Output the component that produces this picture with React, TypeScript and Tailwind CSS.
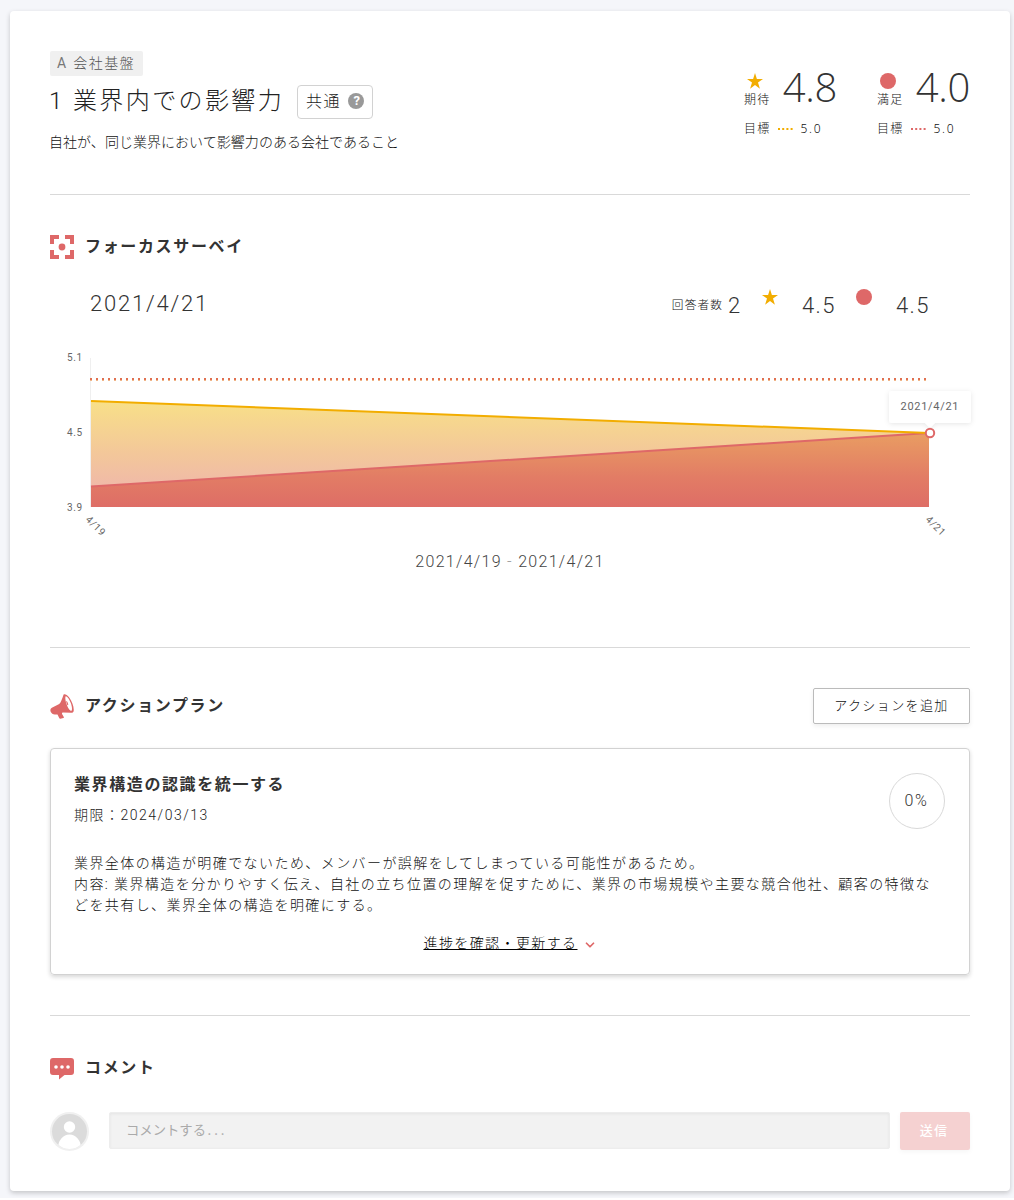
import React, { useState, FormEvent } from 'react';
import { ChevronDown } from 'lucide-react';

const sans = "font-['Roboto','Noto_Sans_CJK_JP',sans-serif]";
const openSans = "font-['Open_Sans','Noto_Sans_CJK_JP',sans-serif]";

const StarIcon: React.FC = () => (
  <svg width="16" height="16" viewBox="0 0 16 16" className="shrink-0">
    <path
      d="M8 0l1.900 5.900H16l-5 3.700 1.900 6.100L8 12l-4.900 3.700L5 9.600 0 5.900h6.100z"
      fill="#f2ad00"
    />
  </svg>
);

const CircleIcon: React.FC = () => (
  <span className="block h-4 w-4 shrink-0 rounded-full bg-[#de6868]" />
);

const FocusIcon: React.FC = () => (
  <svg width="24" height="24" viewBox="0 0 24 24" fill="#de6868">
    <path d="M0 0h9v4H4v5H0zM15 0h9v9h-4V4h-5zM0 15h4v5h5v4H0zM20 15h4v9h-9v-4h5z" />
    <circle cx="12" cy="12" r="3.400" />
  </svg>
);

const MegaphoneIcon: React.FC = () => (
  <svg width="24" height="26" viewBox="0 0 24 26">
    <path
      d="M13.600 1.500C14.600.7 16.800 1.300 19.200 4.400c3 4 4.900 9.600 4.500 13.400-.2 1.700-1.300 2.200-2.600 2l-8.200-.4c-.9.200-1.200.9-.7 1.900l1.600 2.600c.3.600.1.900-.4 1.100l-3 .8c-.6.100-1-.1-1.200-.7l-1.700-3.700-2.200.1c-1.900.3-3.900-.9-4.600-2.700-.7-1.800-.2-3.300 1.200-4l7.300-3.900c1.500-1 2.900-5 4.400-9.400z"
      fill="#de6868"
    />
    <path
      d="M15.800 3.200c1.500 0 3.700 3.200 5 6.700 1.300 3.500 1.600 7.300.7 7.800-1.200.6-3.500-2.500-4.800-6.200-1.300-3.600-1.800-7.800-.9-8.300z"
      fill="#fff"
    />
    <path d="M16.200 8c1.200.3 2.300 2.800 2 4.100-.3.500-.9.100-1.300-1.100-.4-1.100-.8-2.300-.7-3z" fill="#de6868" />
  </svg>
);

const CommentIcon: React.FC = () => (
  <svg width="24" height="22" viewBox="0 0 24 22">
    <path
      d="M3 0h18a3 3 0 0 1 3 3v11a3 3 0 0 1-3 3h-6.500L9 21.500V17H3a3 3 0 0 1-3-3V3a3 3 0 0 1 3-3z"
      fill="#de6868"
    />
    <circle cx="6" cy="9" r="1.800" fill="#fff" />
    <circle cx="12" cy="9" r="1.800" fill="#fff" />
    <circle cx="18" cy="9" r="1.800" fill="#fff" />
  </svg>
);

const Avatar: React.FC = () => (
  <svg width="39" height="39" viewBox="0 0 39 39" className="shrink-0">
    <defs>
      <clipPath id="avatar">
        <circle cx="19.500" cy="19.500" r="17.500" />
      </clipPath>
    </defs>
    <circle cx="19.500" cy="19.500" r="19.500" fill="#f0f0f0" />
    <circle cx="19.500" cy="19.500" r="17.500" fill="#dbdbdb" />
    <g clipPath="url(#avatar)" fill="#fff">
      <circle cx="19.500" cy="15" r="5.700" />
      <ellipse cx="19.500" cy="36" rx="11.500" ry="13.500" />
    </g>
  </svg>
);

type ScoreProps = {
  icon: React.ReactNode;
  label: string;
  value: string;
  target: string;
  color: string;
};

const Score: React.FC<ScoreProps> = ({ icon, label, value, target, color }) => (
  <div className={`w-[93px] ${openSans}`}>
    <div className="flex h-[44px]">
      <div className="flex w-[39px] flex-col pt-[5px]">
        <div className="pl-[3px]">{icon}</div>
        <span className="mt-1 text-[12px] font-light leading-[14px] tracking-[1.2px] text-[#111]">{label}</span>
      </div>
      <span className="whitespace-nowrap text-[40px] font-light leading-[38px] tracking-[-0.3px]">
        {value}
      </span>
    </div>
    <div className="mt-[9px] flex h-[16px] items-center text-[12px] font-light tracking-[1.2px] text-[#111]">
      <span>目標</span>
      <svg width="15" height="2" viewBox="0 0 15 2" className="ml-[8px] mr-[7px]">
        <path d="M0 1h15" stroke={color} strokeWidth="2" strokeDasharray="2 2.200" />
      </svg>
      <span className="font-['Noto_Sans',sans-serif] tracking-[1.8px]">{target}</span>
    </div>
  </div>
);

const SectionTitle: React.FC<{ icon: React.ReactNode; title: string }> = ({ icon, title }) => (
  <div className="flex items-center">
    <div className="mr-[11px] flex w-6 justify-center">{icon}</div>
    <h2 className="text-[16px] font-bold leading-6 tracking-[1.650px]">{title}</h2>
  </div>
);

const SurveyChart: React.FC = () => (
  <svg width="930" height="210" viewBox="50 340 930 210" className="block overflow-visible">
    <defs>
      <linearGradient id="expect" x1="0" y1="0" x2="0" y2="1">
        <stop offset="0" stopColor="#f8e088" />
        <stop offset="0.500" stopColor="#f3c79a" />
        <stop offset="1" stopColor="#eeb1b1" />
      </linearGradient>
      <linearGradient id="satisfy" gradientUnits="userSpaceOnUse" x1="0" y1="433" x2="0" y2="507">
        <stop offset="0" stopColor="#e99d62" />
        <stop offset="0.600" stopColor="#e27c65" />
        <stop offset="1" stopColor="#de6d66" />
      </linearGradient>
      <filter id="tip" x="-20%" y="-40%" width="140%" height="200%">
        <feDropShadow dx="0" dy="1" stdDeviation="2.500" floodOpacity="0.100" />
      </filter>
    </defs>

    <path d="M90.500 358V507" stroke="#efefef" />
    <path d="M91 401L929 433V507H91z" fill="url(#expect)" />
    <path d="M91 486.500L929 433V507H91z" fill="url(#satisfy)" />
    <path d="M91 486.500L929 433" stroke="#de6868" strokeWidth="2" />
    <path d="M91 401L929 433" stroke="#f2ad00" strokeWidth="2" />
    <path d="M90 379H928" stroke="#e0704f" strokeWidth="2" strokeDasharray="2 4" />
    <path d="M90 380.500H928" stroke="#f0b68a" strokeWidth="1" strokeDasharray="2 4" />

    <g className="text-[10px] tracking-[0.6px]" fill="#666">
      <text x="67" y="361">5.1</text>
      <text x="67" y="436">4.5</text>
      <text x="67" y="511">3.9</text>
      <text transform="translate(85 520) rotate(45)">4/19</text>
      <text transform="translate(925 520) rotate(45)">4/21</text>
    </g>

    <path
      d="M892 391h76a3 3 0 0 1 3 3v26a3 3 0 0 1-3 3h-33l-5 5-5-5h-33a3 3 0 0 1-3-3v-26a3 3 0 0 1 3-3z"
      fill="#fff"
      filter="url(#tip)"
    />
    <text x="900.500" y="410" className="text-[11px] tracking-[0.7px]" fill="#666">
      2021/4/21
    </text>
    <circle cx="930" cy="433" r="4.200" fill="#fff" stroke="#de6868" strokeWidth="2" />
  </svg>
);

const App: React.FC = () => {
  const [comment, setComment] = useState<string>('');

  const handleSubmit = (e: FormEvent<HTMLFormElement>): void => {
    e.preventDefault();
    setComment('');
  };

  return (
    <div lang="ja" className={`h-[1198px] bg-[#f5f6fa] pl-[10px] pt-[11px] text-[#333] ${sans}`}>
      <main className="h-[1180px] w-[1000px] rounded-[4px] bg-white px-10 shadow-[0_2px_5px_rgba(0,0,0,0.2)]">
        <header className="flex h-[184px] justify-between border-b border-[#d9d9d9] pt-10">
          <div className="flex flex-col items-start">
            <span className="h-[25px] w-[93px] whitespace-nowrap rounded-[2px] bg-[#f0f0f0] pl-[7px] text-[14px] font-light leading-[25px] tracking-[1.4px] text-[#555]">
              <span className="mr-px font-normal text-[#777]">A</span> 会社基盤
            </span>
            <div className="mt-[9px] flex items-center">
              <h1 className="-ml-px w-[236px] whitespace-nowrap pb-[2px] text-[24px] font-light leading-[32px] tracking-[2.4px] text-[#222]">
                1 業界内での影響力
              </h1>
              <div className="ml-3 flex h-[34px] w-[76px] items-center rounded-[4px] border border-[#d2d2d2] pl-[8px] text-[16px] tracking-[1.6px]">
                <span className="font-light text-[#222]">共通</span>
                <span className="mb-[2px] ml-[7px] flex h-4 w-4 items-center justify-center rounded-full bg-[#999] pl-px text-[13px] font-bold tracking-normal text-white">
                  ?
                </span>
              </div>
            </div>
            <p className="-ml-px mt-[13px] text-[14px] font-light leading-5 tracking-[0.040px] text-[#111]">
              自社が、同じ業界において影響力のある会社であること
            </p>
          </div>
          <div className="flex gap-10 pt-[17px]">
            <Score icon={<StarIcon />} label="期待" value="4.8" target="5.0" color="#f2ad00" />
            <Score icon={<CircleIcon />} label="満足" value="4.0" target="5.0" color="#de6868" />
          </div>
        </header>

        <section className="h-[453px] border-b border-[#d9d9d9] pt-10">
          <SectionTitle icon={<FocusIcon />} title="フォーカスサーベイ" />
          <div className="flex h-[81px] justify-between pl-10 pr-[41px] pt-[29px] font-light">
            <span className="text-[22px] leading-8 tracking-[1.800px]">2021/4/21</span>
            <div className="flex text-[22px] leading-[36px]">
              <span className="text-[11.700px] leading-[34px] tracking-[1.1px] text-[#111]">回答者数</span>
              <span className="ml-[5px] w-[34px]">2</span>
              <div className="w-[40px] pt-px"><StarIcon /></div>
              <span className="w-[54px] tracking-[1.4px]">4.5</span>
              <div className="w-[40px] pt-px"><CircleIcon /></div>
              <span className="w-[33px] tracking-[1.4px]">4.5</span>
            </div>
          </div>
          <SurveyChart />
          <p className="text-center text-[16px] font-light leading-6 tracking-[1.300px] text-[#444]">
            2021/4/19 <span className="text-[#999]">-</span> 2021/4/21
          </p>
        </section>

        <section className="h-[368px] border-b border-[#d9d9d9] pt-10">
          <div className="flex items-center justify-between">
            <SectionTitle icon={<MegaphoneIcon />} title="アクションプラン" />
            <button
              type="button"
              className="h-9 w-[157px] rounded-[2px] border border-[#bbb] text-[13px] font-light tracking-[1.4px] text-[#111] shadow-[0_2px_5px_rgba(0,0,0,0.07)]"
            >
              アクションを追加
            </button>
          </div>
          <article className="mt-6 h-[227px] rounded-[4px] border border-[#d2d2d2] pl-[23px] pr-6 pt-6 shadow-[0_2px_4px_rgba(0,0,0,0.16)]">
            <div className="flex justify-between">
              <div className="pt-px">
                <h3 className="text-[16px] font-bold leading-[22px] tracking-[1.6px]">
                  業界構造の認識を統一する
                </h3>
                <p className="mt-[8px] text-[14px] font-light leading-[22px] tracking-[1.5px] text-[#222]">
                  期限：2024/03/13
                </p>
              </div>
              <div className="flex h-14 w-14 items-center justify-center rounded-full border border-[#d9d9d9] pr-px text-[16px] font-light tracking-[1.6px]">
                0%
              </div>
            </div>
            <p className="mt-6 text-[14px] font-light leading-[21px] tracking-[1.420px] text-[#111]">
              業界全体の構造が明確でないため、メンバーが誤解をしてしまっている可能性があるため。
              <br />
              内容: 業界構造を分かりやすく伝え、自社の立ち位置の理解を促すために、業界の市場規模や主要な競合他社、顧客の特徴などを共有し、業界全体の構造を明確にする。
            </p>
            <div className="mt-[17px] flex items-center justify-center pl-px text-[14px] font-light leading-[21px] tracking-[1.4px] text-black">
              <span className="underline">進捗を確認・更新する</span>
              <ChevronDown className="ml-[5px] mt-[2px] h-[14px] w-[14px] text-[#de6868]" strokeWidth={3} />
            </div>
          </article>
        </section>

        <section className="pt-[39px]">
          <SectionTitle icon={<div className="pt-[3px]"><CommentIcon /></div>} title="コメント" />
          <form onSubmit={handleSubmit} className="mt-[32px] flex">
            <Avatar />
            <input
              className="ml-5 h-[37px] w-[781px] rounded-[2px] border border-[#ededed] bg-[#f2f2f2] px-4 pb-[3px] font-['Noto_Sans_Mono_CJK_JP','Noto_Sans_CJK_JP',monospace] text-[13.333px] font-light shadow-[inset_0_1px_3px_rgba(0,0,0,0.06)] outline-none placeholder:text-[#aaa]"
              placeholder="コメントする..."
              value={comment}
              onChange={(e) => setComment(e.target.value)}
            />
            <button
              type="submit"
              className="ml-[10px] h-[38px] w-[70px] rounded-[2px] bg-[#f5d1d1] pr-[2px] text-[13px] font-medium tracking-[1.3px] text-white shadow-[0_2px_5px_rgba(0,0,0,0.04)]"
            >
              送信
            </button>
          </form>
        </section>
      </main>
    </div>
  );
};

export default App;
